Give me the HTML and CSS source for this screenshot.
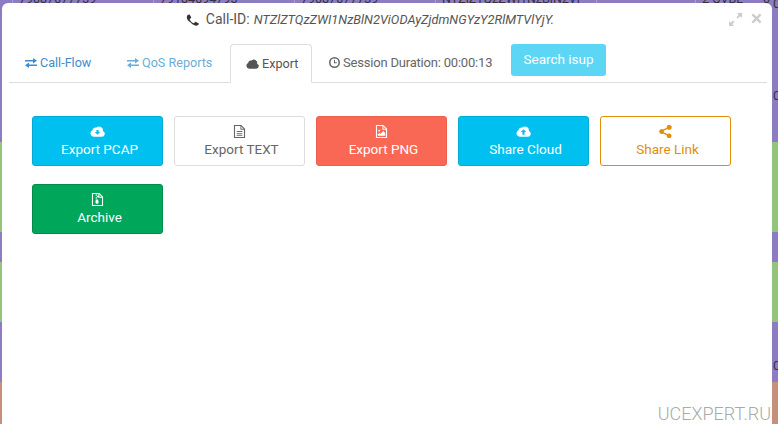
FILE: index.html
```html
<!DOCTYPE html>
<html lang="en">
<head>
  <meta charset="UTF-8">
  <title>Call Export</title>
  <link rel="stylesheet" href="styles.css">
</head>
<body>
  <!-- Table rows behind the modal -->
  <div class="backdrop">
    <div class="band purple band-142">
      <div class="peek-row">
        <span class="cell cell-141">79087077739</span>
        <span class="cell cell-141">79184094795</span>
        <span class="cell cell-141">79087077739</span>
        <span class="cell cell-161">NTZlZTQzZWl1NzBlN2Vi</span>
        <span class="cell cell-99"></span>
        <span class="cell cell-68">2 QVBL</span>
        <span class="cell cell-last">0</span>
      </div>
    </div>
    <div class="band green band-90"></div>
    <div class="band purple band-30"></div>
    <div class="band green band-60"></div>
    <div class="band purple band-60"></div>
    <div class="band brown band-42"></div>
  </div>
  <span class="edge-digit edge-first">0</span>
  <span class="edge-digit edge-top">0</span>
  <span class="edge-digit edge-bottom">0</span>

  <div class="modal">
    <div class="modal-head">
      <svg class="icon phone" viewBox="0 0 14 14"><path d="M13.800 10.900c0 .2 0 .4-.1.7s-.1.5-.2.7c-.1.3-.5.6-1 .9-.5.3-1 .4-1.500.4h-.4c-.1 0-.3-.1-.5-.1s-.3-.1-.4-.1-.3-.1-.5-.2-.4-.1-.4-.2c-.5-.2-1-.4-1.400-.7-.7-.4-1.400-1-2.200-1.800S2.600 8.900 2.200 8.200C1.900 7.800 1.700 7.300 1.500 6.800c0-.1-.1-.2-.2-.4s-.1-.4-.2-.5-.1-.3-.1-.4-.1-.3-.1-.5V4.500c0-.5.1-1 .4-1.500s.6-.9.9-1c.2-.1.400-.2.700-.2s.5-.1.700-.1h.2c.1 0 .3.2.5.6l.3.500.3.6c.1.2.2.3.3.5 0 0 .1.100.2.300s.1.200.2.300 0 .200 0 .300c0 .100-.1.300-.3.500s-.3.400-.5.500-.4.300-.5.500-.3.300-.3.400c0 .100 0 .200 0 .200s0 .200.100.200 0 .100.100.200.100.200.100.200c.400.800.900 1.400 1.400 1.900s1.100 1 1.900 1.400c0 0 .100.100.200.100s.200.100.200.100.100 0 .200.100.100 0 .200 0c.100 0 .200-.100.400-.300s.300-.300.500-.500.300-.400.500-.500.400-.300.500-.300c.100 0 .200 0 .300 0s.200.100.300.200.200.100.300.200.500.300.500.300l.6.300.5.300c.4.200.600.300.600.400z"/></svg>
      <span class="call-label">Call-ID:</span>
      <em class="call-id">NTZlZTQzZWI1NzBlN2ViODAyZjdmNGYzY2RlMTVlYjY.</em>
      <div class="win-controls">
        <svg class="icon expand" viewBox="0 0 14 14"><path d="M14 0v5.500L12 3.500 9.500 6 8 4.500 10.500 2 8.500 0zM0 14V8.500L2 10.500 4.500 8 6 9.500 3.500 12 5.500 14z"/></svg>
        <svg class="icon close" viewBox="0 0 12 12"><path d="M2.400.6 6 4.200 9.600.6 11.400 2.400 7.800 6l3.600 3.600-1.800 1.800L6 7.800l-3.600 3.600L.6 9.600 4.200 6 .6 2.400z"/></svg>
      </div>
    </div>

    <nav class="tabs">
      <a class="tab tab-flow">
        <svg class="icon" viewBox="0 0 12 10"><path d="M0 2h8V0l4 2.750-4 2.750V3.500H0zM12 6.500H4V4.500L0 7.250 4 10V8h8z"/></svg>Call-Flow
      </a>
      <a class="tab tab-qos">
        <svg class="icon" viewBox="0 0 12 10"><path d="M0 2h8V0l4 2.750-4 2.750V3.500H0zM12 6.500H4V4.500L0 7.250 4 10V8h8z"/></svg>QoS Reports
      </a>
      <a class="tab tab-active">
        <svg class="icon" viewBox="0 0 14 10"><path d="M3.500 10A3.200 3.200 0 0 1 2.300 3.900 3 3 0 0 1 6 1.300 3.600 3.600 0 0 1 12 4.600 2.800 2.800 0 0 1 11 10z"/></svg>Export
      </a>
      <span class="tab tab-session">
        <svg class="icon" viewBox="0 0 12 12"><path fill-rule="evenodd" d="M6 0a6 6 0 1 0 0 12A6 6 0 0 0 6 0zm0 1.700a4.300 4.300 0 1 1 0 8.600 4.300 4.300 0 0 1 0-8.600zM5.400 3v3.700H8.500V5.700H6.500V3z"/></svg>Session Duration: 00:00:13
      </span>
      <button class="search-btn">Search isup</button>
    </nav>

    <div class="export-grid">
      <a class="action action-blue">
        <svg class="icon" viewBox="0 0 14 10"><path fill-rule="evenodd" d="M3.500 10A3.200 3.200 0 0 1 2.300 3.900 3 3 0 0 1 6 1.300 3.600 3.600 0 0 1 12 4.600 2.800 2.800 0 0 1 11 10zM6 3.500V5.500H4.500L7 8 9.500 5.500H8V3.500z"/></svg>
        <span>Export PCAP</span>
      </a>
      <a class="action action-plain">
        <svg class="icon" viewBox="0 0 12 14"><path fill-rule="evenodd" d="M0 0h8l4 4v10H0zM1.200 1.200v11.600h9.600V5H7V1.200zM8 1.600V4h2.400zM3 6.500h6v1H3zM3 8.500h6v1H3zM3 10.500h6v1H3z"/></svg>
        <span>Export TEXT</span>
      </a>
      <a class="action action-red">
        <svg class="icon" viewBox="0 0 12 14"><path fill-rule="evenodd" d="M0 0h8l4 4v10H0zM1.200 1.200v11.600h9.600V5H7V1.200zM8 1.600V4h2.400zM3.500 5a1 1 0 1 1 0 2 1 1 0 0 1 0-2zM2 11.500V10l2-1.500 1 1L8 6.500l2 2v3z"/></svg>
        <span>Export PNG</span>
      </a>
      <a class="action action-blue">
        <svg class="icon" viewBox="0 0 14 10"><path fill-rule="evenodd" d="M3.500 10A3.200 3.200 0 0 1 2.300 3.900 3 3 0 0 1 6 1.300 3.600 3.600 0 0 1 12 4.600 2.800 2.800 0 0 1 11 10zM7 3 4.500 5.500H6V8H8V5.500H9.500z"/></svg>
        <span>Share Cloud</span>
      </a>
      <a class="action action-orange">
        <svg class="icon" viewBox="0 0 12 12"><path d="M9.500 0a2.200 2.200 0 1 1-1.700 3.600L4.400 5.300a2.200 2.200 0 0 1 0 1.400L7.800 8.400a2.200 2.200 0 1 1-.6 1.100L3.700 7.800a2.200 2.200 0 1 1 0-3.600L7.200 2.500A2.200 2.200 0 0 1 9.500 0z"/></svg>
        <span>Share Link</span>
      </a>
      <a class="action action-green">
        <svg class="icon" viewBox="0 0 12 14"><path fill-rule="evenodd" d="M0 0h8l4 4v10H0zM1.200 1.200v11.600h9.600V5H7V1.200zM8 1.600V4h2.400zM4 1.500h1.500V3H4zM5.500 3H7v1.500H5.500zM4 4.500h1.500V6H4zM4.200 7h2.400l.6 3a1.600 1.600 0 0 1-3.400 0z"/></svg>
        <span>Archive</span>
      </a>
    </div>

    <div class="watermark">UCEXPERT.RU</div>
  </div>
</body>
</html>
```

FILE: styles.css
```css
html, body {
  margin: 0;
  padding: 0;
  height: 424px;
  overflow: hidden;
}

body {
  font-family: Roboto, "Liberation Sans", Arial, sans-serif;
  font-size: 14px;
  color: #666;
  position: relative;
}

/* Rows behind the modal */
.backdrop {
  display: flex;
  flex-direction: column;
}

.band { overflow: hidden; }
.purple { background-color: #8e7cc3; }
.green { background-color: #93c47d; }
.brown { background-color: #c4917a; }

.band-142 { height: 142px; }
.band-90 { height: 90px; }
.band-30 { height: 30px; }
.band-60 { height: 60px; }
.band-42 { height: 42px; }

.peek-row {
  display: flex;
  height: 14px;
  margin-top: -9px;
  padding-left: 12px;
  color: #333;
  font-size: 12.5px;
  white-space: nowrap;
}

.cell {
  box-sizing: border-box;
  flex-shrink: 0;
  padding-left: 6px;
  border-left: 1px solid #ab9dd6;
}

.cell-141 { width: 141px; }
.cell-161 { width: 161px; }
.cell-99 { width: 99px; }
.cell-68 { width: 68px; }
.cell-last { width: 14px; padding-left: 0; border-left: none; }

.edge-digit {
  position: absolute;
  left: 773px;
  color: #333;
  font-size: 13px;
}

.edge-first { top: -4px; }
.edge-top { top: 88px; }
.edge-bottom { top: 358px; }

/* Modal */
.modal {
  position: absolute;
  left: 2px;
  top: 3px;
  width: 770px;
  height: 421px;
  background: #fff;
  border-radius: 6px 6px 0 0;
}

.icon {
  display: inline-block;
  flex-shrink: 0;
  fill: currentColor;
}

.modal-head {
  position: relative;
  display: flex;
  justify-content: center;
  align-items: center;
  height: 32px;
  padding-right: 34px;
  color: #555;
  font-size: 14px;
}

.phone {
  width: 13px;
  height: 13px;
  color: #333;
  margin-right: 7px;
}

.call-label { margin-right: 4px; }

.call-id { font-size: 12.8px; }

.win-controls {
  position: absolute;
  right: 10px;
  top: 10px;
  display: flex;
  gap: 9px;
  color: #ccc;
}

.expand { width: 13px; height: 13px; }
.close { width: 11px; height: 11px; }

.tabs {
  display: flex;
  align-items: flex-start;
  height: 38px;
  margin: 9px 5px 0 7px;
  border-bottom: 1px solid #ddd;
}

.tab {
  box-sizing: border-box;
  display: flex;
  align-items: center;
  height: 38px;
  padding: 0 0 1px 16px;
  white-space: nowrap;
  font-size: 12.6px;
}

.tab .icon { margin-right: 3px; }

.tab-flow { color: #428bca; width: 102px; }
.tab-qos { color: #6aaed6; width: 119px; }
.tab-flow .icon, .tab-qos .icon { width: 12px; height: 10px; }

.tab-active {
  height: 39px;
  width: 82px;
  padding: 0 0 0 15px;
  color: #555;
  background: #fff;
  border: 1px solid #ddd;
  border-bottom-color: #fff;
  border-radius: 4px 4px 0 0;
}

.tab-active .icon { width: 13px; height: 10px; margin-right: 3px; }

.tab-session {
  width: 181px;
  padding-left: 17px;
  color: #666;
  font-size: 13px;
  letter-spacing: -0.2px;
}

.tab-session .icon { width: 11px; height: 11px; }

.search-btn {
  box-sizing: border-box;
  width: 95px;
  height: 32px;
  margin-left: 18px;
  padding: 0 0 3px;
  border: none;
  border-radius: 3px;
  background-color: #5bd6f5;
  color: #fff;
  font-family: inherit;
  font-size: 13.5px;
}

.export-grid {
  display: grid;
  grid-template-columns: repeat(5, 131px);
  column-gap: 11px;
  row-gap: 18px;
  padding: 33px 0 0 30px;
}

.action {
  box-sizing: border-box;
  display: flex;
  flex-direction: column;
  align-items: center;
  height: 50px;
  padding-top: 8px;
  border: 1px solid transparent;
  border-radius: 3px;
  font-size: 13.5px;
  line-height: 18px;
}

.action .icon {
  width: 15px;
  height: 13px;
}

.action span {
  display: block;
  margin-top: 2px;
  padding-left: 4px;
}

.action-blue {
  background-color: #00c0ef;
  border-color: #00acd6;
  color: #fff;
}

.action-plain {
  background: #fff;
  border-color: #ddd;
  color: #666;
}

.action-red {
  background-color: #f96855;
  border-color: #ef5f4c;
  color: #fff;
}

.action-orange {
  background: #fff;
  border-color: #e08e0b;
  color: #e08e0b;
}

.action-green {
  background-color: #00a65a;
  border-color: #008d4c;
  color: #fff;
}

.watermark {
  position: absolute;
  right: 1px;
  top: 400px;
  color: #aaa;
  font-size: 18px;
  font-weight: 300;
  white-space: nowrap;
}
```
